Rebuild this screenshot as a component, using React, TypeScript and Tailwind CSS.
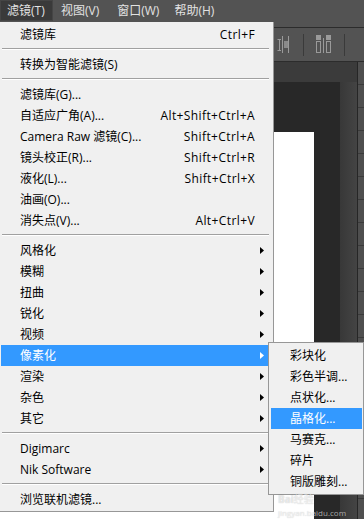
import React from 'react'

type Item =
  | { kind: 'item'; label: string; shortcut?: string; arrow?: boolean; active?: boolean }
  | { kind: 'sep' }

const MAIN: Item[] = [
  { kind: 'item', label: '滤镜库', shortcut: 'Ctrl+F' },
  { kind: 'sep' },
  { kind: 'item', label: '转换为智能滤镜(S)' },
  { kind: 'sep' },
  { kind: 'item', label: '滤镜库(G)...' },
  { kind: 'item', label: '自适应广角(A)...', shortcut: 'Alt+Shift+Ctrl+A' },
  { kind: 'item', label: 'Camera Raw 滤镜(C)...', shortcut: 'Shift+Ctrl+A' },
  { kind: 'item', label: '镜头校正(R)...', shortcut: 'Shift+Ctrl+R' },
  { kind: 'item', label: '液化(L)...', shortcut: 'Shift+Ctrl+X' },
  { kind: 'item', label: '油画(O)...' },
  { kind: 'item', label: '消失点(V)...', shortcut: 'Alt+Ctrl+V' },
  { kind: 'sep' },
  { kind: 'item', label: '风格化', arrow: true },
  { kind: 'item', label: '模糊', arrow: true },
  { kind: 'item', label: '扭曲', arrow: true },
  { kind: 'item', label: '锐化', arrow: true },
  { kind: 'item', label: '视频', arrow: true },
  { kind: 'item', label: '像素化', arrow: true, active: true },
  { kind: 'item', label: '渲染', arrow: true },
  { kind: 'item', label: '杂色', arrow: true },
  { kind: 'item', label: '其它', arrow: true },
  { kind: 'sep' },
  { kind: 'item', label: 'Digimarc', arrow: true },
  { kind: 'item', label: 'Nik Software', arrow: true },
  { kind: 'sep' },
  { kind: 'item', label: '浏览联机滤镜...' },
]

const SUB = ['彩块化', '彩色半调...', '点状化...', '晶格化...', '马赛克...', '碎片', '铜版雕刻...']

const FONT = { fontFamily: '"Open Sans", "Noto Sans CJK SC", sans-serif' }

function Arrow({ white }: { white?: boolean }) {
  return (
    <svg width="4" height="7" viewBox="0 0 4 7" className="absolute right-[4px] top-[7px]">
      <polygon points="0,0 4,3.5 0,7" fill={white ? '#ffffff' : '#000000'} />
    </svg>
  )
}

function Separator() {
  return (
    <div className="h-[9px] pt-[3px] ml-[2px] mr-[4px]">
      <div className="h-px bg-[#a0a0a0]" />
      <div className="h-px bg-white" />
    </div>
  )
}

export default function App() {
  return (
    <div className="relative w-[364px] h-[519px] overflow-hidden bg-[#282828] text-[12px]" style={FONT}>
      {/* workspace behind the menus */}
      <div className="flex flex-col h-full">
        <div className="h-[27px] bg-[#535353] flex items-start text-[#e2e2e2]">
          <div className="h-[21px] w-[53px] flex items-center pl-[6px] bg-[#3a3a3a] border border-[#454545]">
            滤镜(T)
          </div>
          <div className="h-[21px] flex items-center pl-[8px]">视图(V)</div>
          <div className="h-[21px] flex items-center pl-[18px]">窗口(W)</div>
          <div className="h-[21px] flex items-center pl-[15px]">帮助(H)</div>
        </div>
        <div className="h-px bg-[#2c2c2c]" />
        <div className="h-[33px] bg-[#535353] flex items-center">
          <div className="w-[277px]" />
          <svg width="13" height="19" viewBox="0 0 13 19">
            <path d="M0.5 4.5 H4 M2.5 4.5 V15.5 M0.5 15.5 H4" stroke="#9a9a9a" fill="none" />
            <rect x="5" y="1" width="1" height="17" fill="#9a9a9a" />
            <rect x="7" y="6" width="4" height="7" fill="#8a8a8a" />
            <rect x="11" y="1" width="1" height="17" fill="#9a9a9a" />
          </svg>
          <div className="w-[13px]" />
          <div className="w-px h-[22px] bg-[#3a3a3a]" />
          <div className="w-[12px]" />
          <svg width="16" height="19" viewBox="0 0 16 19">
            <rect x="0" y="0" width="5" height="5" fill="#9a9a9a" />
            <rect x="0.5" y="6.5" width="4" height="11" stroke="#9a9a9a" fill="none" />
            <rect x="7" y="3" width="1" height="15" fill="#9a9a9a" />
            <rect x="10" y="0" width="5" height="5" fill="#9a9a9a" />
            <rect x="10.5" y="6.5" width="4" height="11" stroke="#9a9a9a" fill="none" />
          </svg>
          <div className="w-[12px]" />
          <div className="w-px h-[22px] bg-[#3a3a3a]" />
        </div>
        <div className="h-px bg-[#2c2c2c]" />
        <div className="flex flex-1">
          <div className="flex flex-col w-[357px]">
            <div className="h-[20px] bg-[#3b3b3b]" />
            <div className="flex flex-1">
              <div className="w-[314px] pt-[50px]">
                <div className="h-full bg-white" />
              </div>
              <div className="w-[26px]" />
              <div className="w-[17px] bg-gradient-to-r from-[#383838] to-[#444444]" />
            </div>
          </div>
          <div className="w-px bg-[#262626]" />
          <div className="flex-1 bg-[#4f4f4f] flex flex-col">
            {Array.from({ length: 19 }).map((_, i) => (
              <div key={i} className="h-[23px] border-b border-[#3a3a3a]" />
            ))}
          </div>
        </div>
      </div>

      {/* main dropdown */}
      <div className="absolute left-0 top-[22px] w-[274px] bg-[#f0f0f0] border-r border-b border-[#979797] pt-[2px] pb-[1px] text-black">
        {MAIN.map((it, i) =>
          it.kind === 'sep' ? (
            <Separator key={i} />
          ) : (
            <div
              key={i}
              className={`relative h-[21px] ml-[1px] mr-[5px] pl-[19px] pr-[13px] flex items-center justify-between ${
                it.active ? 'bg-[#3399ff] text-white' : ''
              }`}
            >
              <span>{it.label}</span>
              {it.shortcut && <span className="tracking-[0.4px]">{it.shortcut}</span>}
              {it.arrow && <Arrow white={it.active} />}
            </div>
          )
        )}
      </div>

      {/* submenu */}
      <div className="absolute left-[268px] top-[342px] w-[96px] bg-[#f0f0f0] border border-[#979797] py-[2px] text-black">
        {SUB.map((s, i) => (
          <div
            key={s}
            className={`h-[21px] ml-[2px] mr-[1px] pl-[19px] flex items-center whitespace-nowrap ${
              i === 3 ? 'bg-[#3399ff] text-white' : ''
            }`}
          >
            {s}
          </div>
        ))}
      </div>

      {/* watermark */}
      <div className="absolute left-[278px] top-[493px] flex flex-col gap-[3px] pointer-events-none text-white/60 [text-shadow:0_0_1px_rgba(0,0,0,0.25)]">
        <div className="text-[10px] font-bold leading-[12px]">Bai<span className="font-normal">经验</span></div>
        <div className="text-[8px] leading-[10px]">jingyan.baidu.com</div>
      </div>
    </div>
  )
}
